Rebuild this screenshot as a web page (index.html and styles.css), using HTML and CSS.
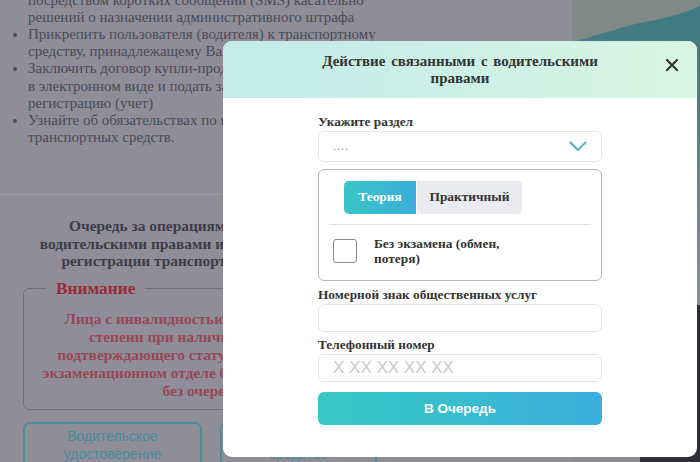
FILE: index.html
```html
<!DOCTYPE html>
<html lang="ru">
<head>
<meta charset="utf-8">
<title>Очередь</title>
<link rel="stylesheet" href="styles.css">
</head>
<body>
<div class="page">
  <main class="main">
    <section class="info">
      <ul class="info-list">
        <li>Получать уведомления<br>посредством коротких сообщений (SMS) касательно<br>решений о назначении административного штрафа</li>
        <li>Прикрепить пользователя (водителя) к транспортному<br>средству, принадлежащему Вам</li>
        <li>Заключить договор купли-продажи транспортного средства<br>в электронном виде и подать заявление на<br>регистрацию (учет)</li>
        <li>Узнайте об обязательствах по налогу на имущество<br>транспортных средств.</li>
      </ul>
    </section>
    <section class="queue">
      <h2 class="queue-title">Очередь за операциями, связанными с<br>водительскими правами и по перерегистрации<br>регистрации транспортных средств (ТС)</h2>
      <fieldset class="notice">
        <legend class="notice-legend">Внимание</legend>
        <p class="notice-text">Лица с инвалидностью первой и второй<br>степени при наличии документа,<br>подтверждающего статус инвалидности, в<br>экзаменационном отделе будут обслуживаться<br>без очереди.</p>
      </fieldset>
      <div class="choices">
        <div class="choice">Водительское<br>удостоверение</div>
        <div class="choice">Транспортное<br>средство</div>
      </div>
    </section>
  </main>
  <aside class="aside">
    <svg class="aside-art" width="128" height="305" viewBox="0 0 128 305">
      <defs>
        <linearGradient id="tealfade" x1="0" y1="0" x2="0" y2="1">
          <stop offset="0" stop-color="#3d7a83"/>
          <stop offset="0.3" stop-color="#4f7f87"/>
          <stop offset="1" stop-color="#86919a"/>
        </linearGradient>
      </defs>
      <rect width="128" height="305" fill="#7f8985"/>
      <path d="M0 42 C25 36 50 26 78 21 C100 17 115 12 128 6 L128 305 L0 305 Z" fill="url(#tealfade)"/>
    </svg>
    <div class="aside-lower"></div>
  </aside>
</div>

<div class="modal" role="dialog">
  <header class="modal-head">
    <h1 class="modal-title">Действие связанными с водительскими правами</h1>
    <button class="modal-close" aria-label="Закрыть">
      <svg width="12" height="12" viewBox="0 0 12 12"><path d="M1 1 L11 11 M11 1 L1 11" stroke="#333" stroke-width="2.2" stroke-linecap="round"/></svg>
    </button>
  </header>
  <div class="modal-body">
    <div class="field-label">Укажите раздел</div>
    <div class="select">
      <span class="select-value">....</span>
      <svg class="chevron" width="18" height="11" viewBox="0 0 18 11"><path d="M1.5 1.5 L9 9 L16.5 1.5" fill="none" stroke="#5bb6c7" stroke-width="2.2" stroke-linecap="round" stroke-linejoin="round"/></svg>
    </div>
    <div class="panel">
      <div class="tabs">
        <div class="tab tab-active">Теория</div>
        <div class="tab">Практичный</div>
      </div>
      <div class="divider"></div>
      <label class="check-row">
        <span class="checkbox"></span>
        <span class="check-text">Без экзамена (обмен,<br>потеря)</span>
      </label>
    </div>
    <div class="field-label label-gap1">Номерной знак общественных услуг</div>
    <div class="input"></div>
    <div class="field-label label-gap2">Телефонный номер</div>
    <div class="input"><span class="placeholder">X XX XX XX XX</span></div>
    <button class="submit">В Очередь</button>
  </div>
</div>
</body>
</html>
```
FILE: styles.css
```css
* { box-sizing: border-box; }
html, body { margin: 0; padding: 0; }
body {
  width: 700px;
  height: 462px;
  overflow: hidden;
  background: #8f8e98;
  font-family: "Liberation Serif", "Times New Roman", serif;
  position: relative;
}
.page {
  display: flex;
  width: 700px;
  height: 462px;
}
.main {
  width: 572px;
  flex: none;
  background: #8f8e98;
}
.info {
  margin-top: -25px;
  height: 220px;
  border-bottom: 1px solid #9c9ba4;
}
.info-list {
  margin: 0;
  padding: 0 0 0 28px;
  font-size: 15px;
  line-height: 17.1px;
  color: #4b4a55;
  white-space: nowrap;
}
.queue {
  width: 408px;
  padding-top: 22px;
}
.queue-title {
  margin: 0;
  text-align: center;
  font-size: 15.4px;
  line-height: 17.5px;
  font-weight: bold;
  color: #3d3c48;
  white-space: nowrap;
}
.notice {
  margin: 9px 23px 0;
  padding: 0 12px 9px;
  border: 1px solid #6e6d79;
  border-radius: 6px;
}
.notice-legend {
  margin-left: 10px;
  padding: 0 10px;
  font-size: 17.3px;
  line-height: 19px;
  font-weight: bold;
  color: #9c2b38;
}
.notice-text {
  margin: 12px 0 0;
  text-align: center;
  font-size: 15.4px;
  line-height: 18px;
  font-weight: bold;
  color: #984757;
  white-space: nowrap;
}
.choices {
  display: grid;
  grid-template-columns: 179px 157px;
  gap: 18px;
  padding: 0 23px;
  margin-top: 12px;
}
.choice {
  height: 60px;
  border: 2px solid #4f8a98;
  border-radius: 7px;
  padding-top: 3px;
  text-align: center;
  font-family: "Liberation Sans", Arial, sans-serif;
  font-size: 14px;
  line-height: 18px;
  color: #4a8a9a;
}
.aside {
  width: 128px;
  flex: none;
  display: flex;
  flex-direction: column;
}
.aside-art { display: block; }
.aside-lower {
  flex: 1;
  background: linear-gradient(to right, #8c8b93 68px, #2e2e3b 68px);
}

/* Modal */
.modal {
  position: absolute;
  left: 223px;
  top: 41px;
  width: 474px;
  height: 416px;
  background: #fff;
  border-radius: 9px;
  overflow: hidden;
}
.modal-head {
  height: 57px;
  display: grid;
  grid-template-columns: 1fr 310px 1fr;
  background: linear-gradient(90deg, #c3ebea 0%, #cdf0e6 50%, #d8f6e3 100%);
}
.modal-title {
  grid-column: 2;
  margin: 0;
  padding-top: 12px;
  text-align: center;
  font-size: 15px;
  line-height: 17px;
  font-weight: bold;
  word-spacing: 2px;
  color: #343434;
}
.modal-close {
  grid-column: 3;
  justify-self: end;
  align-self: start;
  margin: 18px 19px 0 0;
  padding: 0;
  width: 12px;
  height: 12px;
  border: 0;
  background: none;
  display: flex;
}
.modal-body {
  padding: 15.5px 95px 0;
}
.field-label {
  font-size: 13.3px;
  line-height: 16px;
  font-weight: bold;
  color: #333;
  margin-bottom: 1px;
}
.label-gap1 { margin-top: 6.5px; }
.label-gap2 { margin-top: 5px; }
.select {
  height: 31px;
  border: 1px solid #e6e6e6;
  border-radius: 6px;
  display: flex;
  align-items: center;
  justify-content: space-between;
  padding: 0 14px 0 14px;
}
.select-value {
  font-size: 12px;
  color: #9a9a9a;
  letter-spacing: 1px;
}
.chevron { display: block; margin-top: 1px; }
.panel {
  margin-top: 7px;
  border: 1px solid #b8b8b8;
  border-radius: 6px;
  padding: 11px 10px 13.5px;
}
.tabs {
  display: flex;
  gap: 1px;
  padding-left: 15px;
}
.tab {
  height: 33px;
  width: 105px;
  display: flex;
  align-items: center;
  justify-content: center;
  background: #e9ebef;
  border-radius: 0 5px 5px 0;
  font-size: 13.4px;
  font-weight: bold;
  color: #333;
}
.tab-active {
  width: 72px;
  background: linear-gradient(90deg, #39c5c6, #3badd9);
  color: #fff;
  border-radius: 5px 0 0 5px;
}
.divider {
  height: 1px;
  background: #dedede;
  margin-top: 10px;
}
.check-row {
  display: flex;
  align-items: center;
  margin-top: 11.5px;
  padding-left: 4px;
}
.checkbox {
  width: 24px;
  height: 24px;
  flex: none;
  border: 1.5px solid #8b8b8b;
  border-radius: 3px;
  background: #fff;
}
.check-text {
  margin-left: 17px;
  font-size: 13.4px;
  line-height: 15px;
  font-weight: bold;
  color: #333;
}
.input {
  height: 28px;
  border: 1px solid #e3e3e3;
  border-radius: 6px;
  display: flex;
  align-items: center;
  padding-left: 14px;
}
.placeholder {
  font-family: "Liberation Sans", Arial, sans-serif;
  font-size: 17px;
  color: #cacaca;
}
.submit {
  display: block;
  width: 100%;
  height: 33px;
  margin-top: 10px;
  border: 0;
  border-radius: 6px;
  background: linear-gradient(90deg, #37c8c5 0%, #38bcd0 50%, #3badde 100%);
  color: #fff;
  font-family: "Liberation Sans", Arial, sans-serif;
  font-size: 13.5px;
  font-weight: bold;
}
```
